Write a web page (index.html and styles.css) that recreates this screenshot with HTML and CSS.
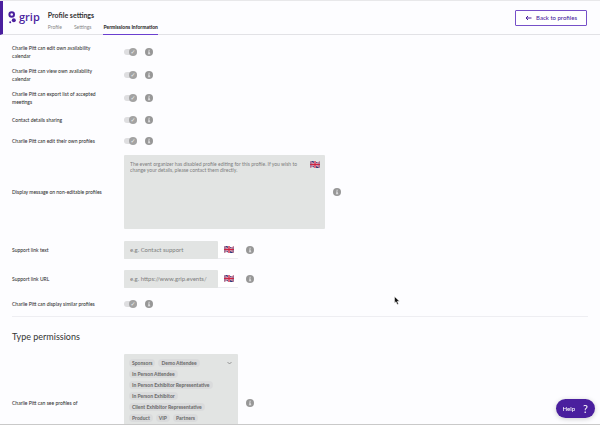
FILE: index.html
```html
<!DOCTYPE html>
<html lang="en">
    <head>
        <meta charset="UTF-8" />
        <meta name="viewport" content="width=device-width, initial-scale=1.0" />
        <title>Profile settings</title>
        <link rel="stylesheet" href="styles.css">
    </head>
    <body>
        <svg class="sprite" aria-hidden="true">
            <symbol id="info" viewBox="0 0 16 16">
                <circle cx="8" cy="8" r="8" fill="#979797" />
                <path d="M7 3.5h2.4v2H7zM6 7h3.4v4.2h1.1v1.4H5.8v-1.4h1.1V8.4H6z" fill="#e4e4e6" />
            </symbol>
            <symbol id="flag" viewBox="0 0 20 14">
                <path d="M0 1Q5-1 10 1T20 1V13Q15 15 10 13T0 13Z" fill="#2c3577" />
                <path d="M0 1L20 13M20 1L0 13" stroke="#d8cfe0" stroke-width="2.4" />
                <path d="M0 1L20 13M20 1L0 13" stroke="#cf2f4c" stroke-width="1.2" />
                <path d="M10 0V14M0 7H20" stroke="#f0e6ee" stroke-width="4.4" />
                <path d="M10 0V14M0 7H20" stroke="#cc2443" stroke-width="2.6" />
            </symbol>
        </svg>

        <header class="header">
            <svg class="logo" viewBox="0 0 16 26" aria-hidden="true">
                <circle cx="7.4" cy="7" r="4.6" fill="none" stroke="#4a1f9e" stroke-width="4" />
                <circle cx="11.6" cy="18.4" r="4" fill="#4a1f9e" />
                <circle cx="4.4" cy="22.6" r="2" fill="#4a1f9e" />
            </svg>
            <span class="brand">grip</span>
            <div class="title-block">
                <h1>Profile settings</h1>
                <nav class="tabs">
                    <a href="#">Profile</a>
                    <a href="#">Settings</a>
                    <a href="#" class="active">Permissions Information</a>
                </nav>
            </div>
            <button class="back">
                <svg viewBox="0 0 14 12" aria-hidden="true">
                    <path d="M13 6H2M6 2L2 6L6 10" fill="none" stroke="currentColor" stroke-width="2" />
                </svg>
                Back to profiles
            </button>
        </header>

        <main>
            <section class="section">
                <div class="row">
                    <label for="edit-calendar">Charlie Pitt can edit own availability calendar</label>
                    <input class="toggle" type="checkbox" id="edit-calendar" checked disabled />
                    <svg class="info"><use href="#info" /></svg>
                </div>
                <div class="row">
                    <label for="view-calendar">Charlie Pitt can view own availability calendar</label>
                    <input class="toggle" type="checkbox" id="view-calendar" checked disabled />
                    <svg class="info"><use href="#info" /></svg>
                </div>
                <div class="row">
                    <label for="export">Charlie Pitt can export list of accepted meetings</label>
                    <input class="toggle" type="checkbox" id="export" checked disabled />
                    <svg class="info"><use href="#info" /></svg>
                </div>
                <div class="row">
                    <label for="sharing">Contact details sharing</label>
                    <input class="toggle" type="checkbox" id="sharing" checked disabled />
                    <svg class="info"><use href="#info" /></svg>
                </div>
                <div class="row">
                    <label for="edit-profiles">Charlie Pitt can edit their own profiles</label>
                    <input class="toggle" type="checkbox" id="edit-profiles" checked disabled />
                    <svg class="info"><use href="#info" /></svg>
                </div>
                <div class="row row-message">
                    <label for="message">Display message on non-editable profiles</label>
                    <div class="message">
                        <textarea id="message" disabled>The event organizer has disabled profile editing for this profile. If you wish to change your details, please contact them directly.</textarea>
                        <svg class="flag"><use href="#flag" /></svg>
                    </div>
                    <svg class="info"><use href="#info" /></svg>
                </div>
                <div class="row row-link">
                    <label for="link-text">Support link text</label>
                    <div class="field">
                        <input type="text" id="link-text" placeholder="e.g. Contact support" disabled />
                        <svg class="flag"><use href="#flag" /></svg>
                    </div>
                    <svg class="info"><use href="#info" /></svg>
                </div>
                <div class="row row-link">
                    <label for="link-url">Support link URL</label>
                    <div class="field">
                        <input type="text" id="link-url" placeholder="e.g. https://www.grip.events/" disabled />
                        <svg class="flag"><use href="#flag" /></svg>
                    </div>
                    <svg class="info"><use href="#info" /></svg>
                </div>
                <div class="row">
                    <label for="similar">Charlie Pitt can display similar profiles</label>
                    <input class="toggle" type="checkbox" id="similar" checked disabled />
                    <svg class="info"><use href="#info" /></svg>
                </div>
            </section>

            <section class="section">
                <h2>Type permissions</h2>
                <div class="row">
                    <label for="see-profiles">Charlie Pitt can see profiles of</label>
                    <button class="multi" id="see-profiles" disabled>
                        <span class="tags">
                            <span class="tag">Sponsors</span>
                            <span class="tag">Demo Attendee</span>
                            <span class="tag">In Person Attendee</span>
                            <span class="tag">In Person Exhibitor Representative</span>
                            <span class="tag">In Person Exhibitor</span>
                            <span class="tag">Client Exhibitor Representative</span>
                            <span class="tag">Product</span>
                            <span class="tag">VIP</span>
                            <span class="tag">Partners</span>
                        </span>
                        <svg class="chevron" viewBox="0 0 10 16" aria-hidden="true">
                            <path d="M1 6L5 10L9 6" fill="none" stroke="#777" stroke-width="1.4" />
                        </svg>
                    </button>
                    <svg class="info"><use href="#info" /></svg>
                </div>
            </section>
        </main>

        <button class="help">Help <span class="mark">?</span></button>

        <svg class="cursor" viewBox="0 0 12 18" aria-hidden="true">
            <path d="M1 1V14L4 11.4L6.4 17L9 16L6.6 10.6H11Z" fill="#111" stroke="#fff" />
        </svg>
    </body>
</html>
```
FILE: styles.css
```css
* {
    box-sizing: border-box;
}

body {
    display: flex;
    flex-direction: column;
    margin: 0;
    height: 100vh;
    background-color: #fdfdff;
    border-top: 1px solid #e8e8ea;
    border-bottom: 1px solid #c9c9c9;
    font-family: Lato, sans-serif;
    font-size: 5px;
    color: #333;
}

main {
    flex: 1;
    min-height: 0;
    overflow: hidden;
}

button,
input,
textarea {
    font-family: inherit;
}

.sprite {
    display: none;
}

.header {
    display: flex;
    flex: none;
    align-items: center;
    height: 34px;
    padding: 0 13px 0 5px;
    border-left: 3px solid #4a1f9e;
    border-bottom: 1px solid #e2e2e6;
}

.logo {
    width: 8px;
    height: 13px;
}

.brand {
    margin: 0 8px 2px 3px;
    font-family: "Open Sans", sans-serif;
    font-size: 11px;
    line-height: 12px;
    font-weight: 600;
    color: #4a1f9e;
}

.title-block {
    display: flex;
    flex-direction: column;
    justify-content: space-between;
    height: 34px;
    padding-top: 10px;
}

h1 {
    margin: 0;
    font-size: 7px;
    line-height: 8px;
}

.tabs {
    display: flex;
    gap: 12px;
}

.tabs a {
    padding-bottom: 3px;
    border-bottom: 1px solid transparent;
    font-size: 5px;
    line-height: 8px;
    color: #888;
    text-decoration: none;
}

.tabs .active {
    border-color: #6a3fd0;
    font-weight: 900;
    color: #333;
}

.back {
    display: flex;
    align-items: center;
    gap: 4px;
    height: 16px;
    margin-left: auto;
    padding: 0 9px;
    border: 1px solid #7650c8;
    border-radius: 1px;
    background-color: #fff;
    font-size: 6px;
    font-weight: 500;
    color: #4a1f9e;
}

.back svg {
    width: 7px;
    height: 6px;
}

.section {
    margin: 0 12px;
    padding: 5px 0 2px;
    border-bottom: 1px solid #eeeef2;
}

.row {
    display: flex;
    align-items: center;
    min-height: 21px;
    padding: 4px 0 3px;
}

.row-message {
    margin-bottom: 3px;
}

.row-link {
    min-height: 29px;
}

.row label {
    flex: none;
    width: 112px;
    padding-right: 16px;
    font-weight: 500;
    line-height: 8px;
}

.toggle {
    appearance: none;
    display: flex;
    align-items: center;
    justify-content: flex-end;
    width: 13px;
    height: 6px;
    margin: 0;
    border-radius: 3px;
    background-color: #dedee0;
}

.toggle::before {
    content: "✓";
    flex: none;
    width: 8px;
    height: 8px;
    border-radius: 50%;
    background-color: #a3a3a3;
    font-family: "DejaVu Sans", sans-serif;
    font-size: 6px;
    line-height: 8px;
    text-align: center;
    color: #eee;
}

.info {
    flex: none;
    width: 8px;
    height: 8px;
    margin-left: 8px;
}

.flag {
    flex: none;
    width: 10px;
    height: 7px;
}

.message {
    display: flex;
    width: 201px;
    height: 74px;
    padding: 6px 5px 6px 6px;
    border-radius: 1px;
    background-color: #e2e4e3;
}

.message textarea {
    flex: 1;
    padding: 0;
    border: 0;
    background: none;
    font-size: 5px;
    line-height: 6px;
    color: #7d7d7d;
    resize: none;
}

.field {
    display: flex;
    align-items: center;
    width: 114px;
    height: 18px;
    padding-right: 4px;
    border-bottom: 1px solid #ececf0;
    background-color: #fff;
}

.field input {
    flex: 1;
    min-width: 0;
    height: 18px;
    margin-right: 6px;
    padding: 0 6px;
    border: 0;
    border-radius: 1px;
    background-color: #e2e4e3;
    font-size: 6px;
}

.field input::placeholder {
    color: #7d7d7d;
}

h2 {
    margin: 0;
    padding: 9px 0 7px;
    font-size: 9px;
    line-height: 12px;
    font-weight: normal;
}

.multi {
    display: flex;
    align-items: flex-start;
    width: 114px;
    height: 98px;
    padding: 5px 6px 5px 5px;
    border: 0;
    border-radius: 1px;
    background-color: #e2e4e3;
}

.tags {
    flex: 1;
    display: flex;
    flex-wrap: wrap;
    gap: 3px;
}

.tag {
    padding: 0 3px;
    border-radius: 4px;
    background-color: #dadbdc;
    font-size: 5px;
    line-height: 8px;
    font-weight: 900;
    color: #707070;
}

.chevron {
    width: 5px;
    height: 8px;
}

.help {
    position: fixed;
    right: 5px;
    bottom: 7px;
    display: flex;
    align-items: center;
    gap: 8px;
    height: 19px;
    padding: 0 7px;
    border: 0;
    border-radius: 10px;
    background-color: #4a1f9e;
    box-shadow: 0 1px 5px rgba(0, 0, 0, 0.2);
    font-size: 6px;
    font-weight: 500;
    color: #fff;
}

.mark {
    font-size: 11px;
    font-weight: normal;
}

.cursor {
    position: fixed;
    left: 394px;
    top: 296px;
    width: 6px;
    height: 9px;
}
```
